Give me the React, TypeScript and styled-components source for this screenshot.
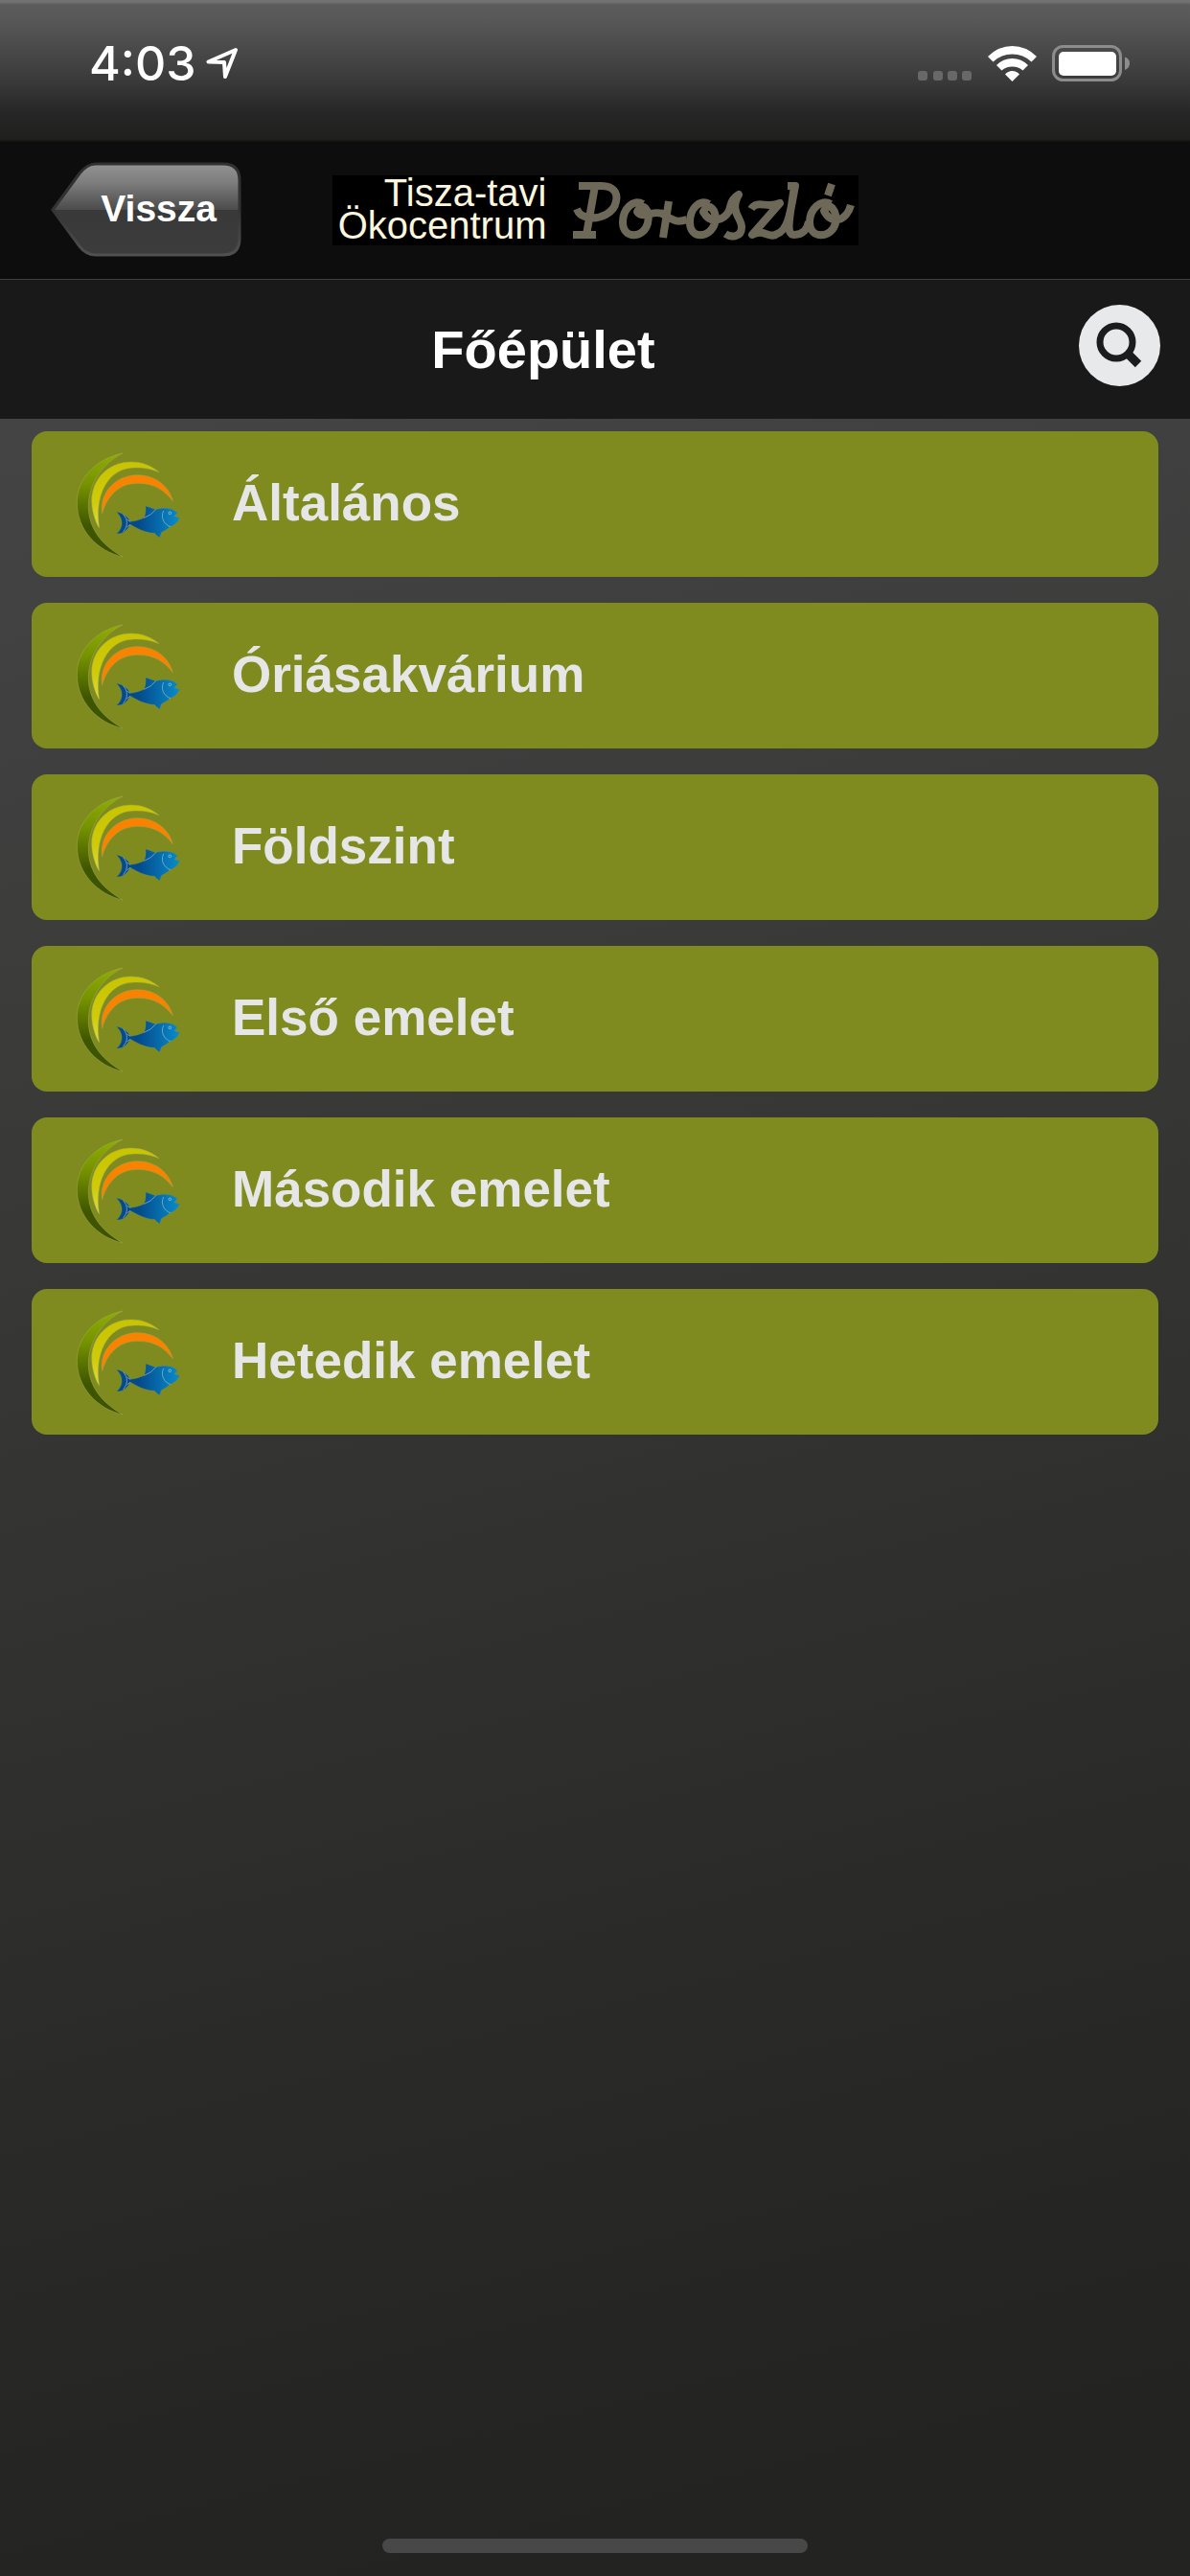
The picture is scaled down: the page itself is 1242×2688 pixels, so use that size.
import React from "react";
import styled, { createGlobalStyle } from "styled-components";

const GlobalStyle = createGlobalStyle`
  *, *::before, *::after { box-sizing: border-box; }
  html, body { margin: 0; background: #232321; }
  body, button { font-family: "Liberation Sans", Arial, Helvetica, sans-serif; }
`;

const Screen = styled.div`
  display: flex;
  flex-direction: column;
  min-height: 100vh;
  background: linear-gradient(166deg, #444444 16%, #353534 50%, #292928 76%, #232321 93%);
`;

const StatusBar = styled.div`
  display: flex;
  justify-content: space-between;
  height: 148px;
  padding: 40px 62px 0 93px;
  background: linear-gradient(#727272 0, #727272 2px, #5c5c5c 5px, #585858 20px, #3c3c3c 80px, #262626 118px, #20201e 145px, #111111 148px);
`;

const StatusGroup = styled.div<{ $gap: number }>`
  display: flex;
  align-items: center;
  gap: ${(p) => p.$gap}px;
  height: 52px;
`;

const Clock = styled.time`
  color: #ffffff;
  font: 500 50px/52px Inter, Roboto, sans-serif;
`;

const NavBar = styled.header`
  display: grid;
  grid-template-columns: 1fr auto 1fr;
  align-items: center;
  height: 143px;
  padding: 0 53px;
  background: #0d0d0d;
`;

const BackButton = styled.button`
  display: grid;
  justify-self: start;
  width: 199px;
  height: 99px;
  margin-bottom: 3px;
  padding: 0;
  border: 0;
  background: none;
  color: #ffffff;
  cursor: pointer;
  > * { grid-area: 1 / 1; }
`;

const BackLabel = styled.span`
  align-self: center;
  justify-self: end;
  padding-right: 26px;
  font-size: 39px;
  font-weight: 700;
  line-height: 48px;
`;

const Brand = styled.div`
  display: flex;
  align-items: center;
  justify-content: space-between;
  width: 549px;
  height: 73px;
  background: #000000;
`;

const BrandName = styled.div`
  display: flex;
  flex-direction: column;
  width: 224px;
  padding-bottom: 4px;
  color: #fbf6dc;
  font-size: 40px;
  line-height: 34px;
  text-align: right;
  white-space: nowrap;
`;

const TitleBar = styled.div`
  display: grid;
  grid-template-columns: 1fr auto;
  align-items: center;
  height: 146px;
  padding: 0 31px 0 0;
  border-top: 1px solid #3e3e3e;
  background: #191919;
`;

const Title = styled.h1`
  margin: 0;
  padding-left: 8px;
  color: #ffffff;
  font-size: 56px;
  line-height: 64px;
  text-align: center;
`;

const SearchButton = styled.button`
  display: grid;
  place-items: center;
  width: 85px;
  height: 85px;
  margin-bottom: 8px;
  padding: 0;
  border: 0;
  border-radius: 50%;
  background: #e8e9eb;
  cursor: pointer;
`;

const List = styled.ul`
  display: flex;
  flex: 1;
  flex-direction: column;
  gap: 27px;
  margin: 0;
  padding: 13px 33px;
  list-style: none;
`;

const Row = styled.a`
  display: flex;
  align-items: center;
  gap: 48px;
  height: 152px;
  padding: 0 45px;
  border-radius: 16px;
  background: #7f8a1f;
  color: #e6e6e6;
  font-size: 53px;
  font-weight: 700;
  line-height: 64px;
  text-decoration: none;
`;

const RowLabel = styled.span`
  padding-bottom: 2px;
`;

const HomeIndicator = styled.div`
  align-self: center;
  width: 444px;
  height: 15px;
  margin-bottom: 24px;
  border-radius: 8px;
  background: #484848;
`;

const LocationIcon = () => (
  <svg width="34" height="34" viewBox="0 0 34 34" fill="none" aria-hidden="true">
    <path d="M31 3 2.500 15.500 19 16 20 31Z" stroke="#fff" strokeWidth="4" strokeLinejoin="round" />
  </svg>
);

const SignalIcon = () => (
  <svg width="57" height="52" viewBox="0 0 57 52" fill="#686868" aria-hidden="true">
    {[0, 16, 31, 46].map((x) => (
      <rect key={x} x={x} y="34" width="10" height="10" rx="3" />
    ))}
  </svg>
);

const WifiIcon = () => (
  <svg width="51" height="37" viewBox="0 0 51 37" fill="#fff" aria-hidden="true">
    <path d="M0 11Q11 0 25.500 0T51 11L45.500 16.500Q37 8.500 25.500 8.500T5.500 16.500Z" />
    <path d="M9 20Q16 13 25.500 13T42 20L36.500 25.500Q32 21.500 25.500 21.500T14.500 25.500Z" />
    <path d="M18 29.500Q21 26 25.500 26T33 29.500L25.500 37Z" />
  </svg>
);

const BatteryIcon = () => (
  <svg width="82" height="38" viewBox="0 0 82 38" aria-hidden="true">
    <rect x="1.500" y="1.500" width="70" height="35" rx="10" fill="none" stroke="#8c8c8c" strokeWidth="3" />
    <rect x="7" y="7" width="60" height="25" rx="5" fill="#fff" />
    <path d="M76 12.500Q81 14 81 19T76 26Z" fill="#8c8c8c" />
  </svg>
);

const BackShape = () => (
  <svg width="199" height="99" viewBox="0 0 199 99" aria-hidden="true">
    <defs>
      <linearGradient id="gloss" x1="0" y1="0" x2="0" y2="1">
        <stop offset="0" stopColor="#929292" />
        <stop offset=".2" stopColor="#7e7e7e" />
        <stop offset=".5" stopColor="#4c4c4c" />
        <stop offset=".51" stopColor="#393939" />
        <stop offset="1" stopColor="#3c3c3c" />
      </linearGradient>
      <linearGradient id="edge" x1="0" y1="0" x2="0" y2="1">
        <stop offset="0" stopColor="#303030" />
        <stop offset=".5" stopColor="#333" />
        <stop offset="1" stopColor="#505050" />
      </linearGradient>
    </defs>
    <path
      d="M2 50 30 12Q38 2 47 2H180Q197 2 197 19V80Q197 97 180 97H47Q37 97 30 88Z"
      fill="url(#gloss)"
      stroke="url(#edge)"
      strokeWidth="3"
    />
  </svg>
);

const Wordmark = () => (
  <svg
    width="301"
    height="73"
    viewBox="595 182 301 73"
    fill="none"
    stroke="#6e6858"
    strokeWidth="8"
    strokeLinejoin="round"
    role="img"
    aria-label="Poroszló"
  >
    <path d="M604 193H628C640 193 645 200 643 209C641 221 627 228 614 226C606 224 604 222 602 217M621 193 612 244M598 244H622" />
    <path d="M671 212C661 206 650 217 650 231C650 249 672 248 676 232C679 219 671 208 665 220C670 228 683 218 690 222M698 209 692 247M689 221C700 226 704 233 717 228" />
    <path d="M740 212C730 206 720 217 720 231C720 249 741 248 746 232C749 219 740 208 734 220C741 233 755 230 761 219C763 211 764 206 771 202C761 220 774 226 774 236C774 247 763 247 757 243" />
    <path d="M784 217C790 207 801 217 814 211L785 244C798 237 803 249 811 243C823 239 825 219 830 193H822M829 193C825 224 819 244 829 244C838 244 843 238 844 230" />
    <path d="M867 212C857 206 845 217 845 231C845 249 868 248 872 232C874 219 866 208 860 219C868 235 884 229 888 213M868 191 864 203" />
  </svg>
);

const SearchIcon = () => (
  <svg width="49" height="49" viewBox="0 0 49 49" fill="none" stroke="#1b1c1d" aria-hidden="true">
    <circle cx="21" cy="21" r="17" strokeWidth="7" />
    <path d="M33 33 44 44" strokeWidth="9" />
  </svg>
);

const LogoGradients = () => (
  <svg width="0" height="0" display="block" aria-hidden="true">
    <defs>
      <linearGradient id="reed" x1="0" y1="0" x2="0" y2="1">
        <stop offset="0" stopColor="#8fae00" />
        <stop offset=".3" stopColor="#769200" />
        <stop offset=".7" stopColor="#3f5600" />
        <stop offset="1" stopColor="#3c5200" />
      </linearGradient>
      <linearGradient id="sun" x1="0" y1="0" x2="0" y2="1">
        <stop offset="0" stopColor="#c9c400" />
        <stop offset=".6" stopColor="#cfcb08" />
        <stop offset="1" stopColor="#dddc3c" />
      </linearGradient>
      <linearGradient id="fish" x1="0" y1="0" x2="1" y2="0">
        <stop offset="0" stopColor="#064a8c" />
        <stop offset=".35" stopColor="#044a8a" />
        <stop offset="1" stopColor="#0a8ccc" />
      </linearGradient>
    </defs>
  </svg>
);

const EcoLogo = () => (
  <svg width="116" height="116" viewBox="54 54 348 348" aria-hidden="true">
    <g stroke="#a3ab55" strokeWidth="1.500">
      <path
        d="M204 69C120 85 60 150 61 225C62 310 125 375 204 393C145 360 97 310 97 235C97 165 140 100 204 69Z"
        fill="url(#reed)"
      />
      <path
        d="M318 128C290 105 262 96 230 96C160 96 108 150 107 215C107 245 116 280 131 303C115 205 155 120 232 115C262 112 292 117 318 128Z"
        fill="url(#sun)"
      />
      <path
        d="M140 257C130 190 185 137 250 137C310 137 350 175 361 218C335 185 305 163 250 163C190 163 155 205 140 257Z"
        fill="#f98200"
      />
    </g>
    <path
      d="M184 252C206 256 222 270 228 283C242 282 258 277 271 271Q278 255 276 234Q291 239 308 245C330 238 358 238 376 255L366 266 383 271C377 284 367 295 353 298C343 308 335 312 325 317L320 333Q311 328 304 319C275 319 248 303 228 292C219 308 207 322 185 321C203 306 211 277 184 252Z"
      fill="url(#fish)"
      stroke="#5f946f"
      strokeWidth="1"
    />
    <path
      d="M271 271Q294 263 308 245M332 249C322 269 333 292 354 299M228 283 217 276M228 292 217 300M206 260C222 278 220 298 206 314"
      fill="none"
      stroke="#9cc0c8"
      strokeWidth="2"
    />
    <circle cx="352" cy="256" r="4" fill="#0878b4" stroke="#b8d4d4" strokeWidth="2" />
  </svg>
);

const rows = ["Általános", "Óriásakvárium", "Földszint", "Első emelet", "Második emelet", "Hetedik emelet"];

export default function App() {
  return (
    <Screen>
      <GlobalStyle />
      <LogoGradients />
      <StatusBar>
        <StatusGroup $gap={10}>
          <Clock>4:03</Clock>
          <LocationIcon />
        </StatusGroup>
        <StatusGroup $gap={16}>
          <SignalIcon />
          <WifiIcon />
          <BatteryIcon />
        </StatusGroup>
      </StatusBar>
      <NavBar>
        <BackButton type="button">
          <BackShape />
          <BackLabel>Vissza</BackLabel>
        </BackButton>
        <Brand>
          <BrandName>
            <span>Tisza-tavi</span>
            <span>Ökocentrum</span>
          </BrandName>
          <Wordmark />
        </Brand>
      </NavBar>
      <TitleBar>
        <Title>Főépület</Title>
        <SearchButton type="button" aria-label="Keresés">
          <SearchIcon />
        </SearchButton>
      </TitleBar>
      <List>
        {rows.map((label) => (
          <li key={label}>
            <Row href="#">
              <EcoLogo />
              <RowLabel>{label}</RowLabel>
            </Row>
          </li>
        ))}
      </List>
      <HomeIndicator />
    </Screen>
  );
}
